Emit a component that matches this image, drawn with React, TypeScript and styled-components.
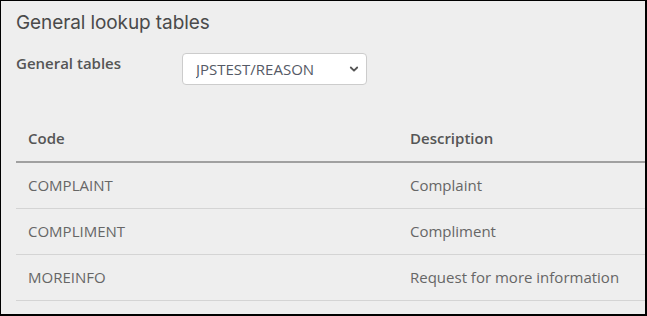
import React, { useState } from 'react';
import styled, { createGlobalStyle } from 'styled-components';

const GlobalStyle = createGlobalStyle`
  html, body {
    margin: 0;
    padding: 0;
    background: #ffffff;
  }
  * {
    box-sizing: border-box;
  }
`;

interface LookupRow {
  code: string;
  description: string;
}

const rows: LookupRow[] = [
  { code: 'COMPLAINT', description: 'Complaint' },
  { code: 'COMPLIMENT', description: 'Compliment' },
  { code: 'MOREINFO', description: 'Request for more information' },
];

const Frame = styled.div`
  width: 647px;
  height: 316px;
  overflow: hidden;
  background-color: #eeeeee;
  border-style: solid;
  border-color: #000000;
  border-width: 1px 2px 2px 1px;
  padding: 10px 0 0 15px;
  font-family: 'Open Sans', 'Liberation Sans', sans-serif;
`;

const Title = styled.h1`
  margin: 0;
  font-family: Inter, 'Open Sans', sans-serif;
  font-size: 19px;
  font-weight: 400;
  line-height: 24px;
  color: #4a4a4a;
  letter-spacing: -0.1px;
`;

const FormRow = styled.div`
  display: flex;
  align-items: flex-start;
  margin-top: 17px;
`;

const Label = styled.label`
  width: 166px;
  margin-top: 1px;
  font-size: 15px;
  font-weight: 600;
  line-height: 20px;
  color: #555555;
`;

const SelectWrap = styled.div`
  position: relative;
  margin-top: 1px;
`;

const Select = styled.select`
  appearance: none;
  -webkit-appearance: none;
  width: 185px;
  height: 32px;
  padding: 0 24px 0 13px;
  border: 1px solid #cccccc;
  border-radius: 4px;
  background-color: #ffffff;
  font-family: 'Open Sans', 'Liberation Sans', sans-serif;
  font-size: 15px;
  color: #555a66;
  outline: none;
`;

const Chevron = styled.svg`
  position: absolute;
  right: 8px;
  top: 13px;
  pointer-events: none;
`;

const Table = styled.table`
  margin-top: 31px;
  width: 660px;
  border-collapse: collapse;
  font-size: 15px;
  line-height: 21px;
`;

const HeadCell = styled.th`
  text-align: left;
  padding: 12px;
  font-weight: 600;
  color: #555555;
  border-bottom: 2px solid #a0a0a0;
`;

const Cell = styled.td<{ $wide?: boolean }>`
  padding: 12px;
  width: ${({ $wide }) => ($wide ? '382px' : 'auto')};
  color: #666666;
  border-bottom: 1px solid #d4d4d4;
`;

const App: React.FC = () => {
  const [table, setTable] = useState('JPSTEST/REASON');

  return (
    <>
      <GlobalStyle />
      <Frame>
        <Title>General lookup tables</Title>
        <FormRow>
          <Label htmlFor="general-tables">General tables</Label>
          <SelectWrap>
            <Select
              id="general-tables"
              value={table}
              onChange={(e) => setTable(e.target.value)}
            >
              <option value="JPSTEST/REASON">JPSTEST/REASON</option>
            </Select>
            <Chevron width="10" height="7" viewBox="0 0 10 7">
              <path
                d="M1.8 1.5 L5 4.7 L8.2 1.5"
                fill="none"
                stroke="#555"
                strokeWidth="1.8"
                strokeLinecap="round"
                strokeLinejoin="round"
              />
            </Chevron>
          </SelectWrap>
        </FormRow>
        <Table>
          <thead>
            <tr>
              <HeadCell style={{ width: 382 }}>Code</HeadCell>
              <HeadCell>Description</HeadCell>
            </tr>
          </thead>
          <tbody>
            {rows.map((row) => (
              <tr key={row.code}>
                <Cell $wide>{row.code}</Cell>
                <Cell>{row.description}</Cell>
              </tr>
            ))}
          </tbody>
        </Table>
      </Frame>
    </>
  );
};

export default App;
